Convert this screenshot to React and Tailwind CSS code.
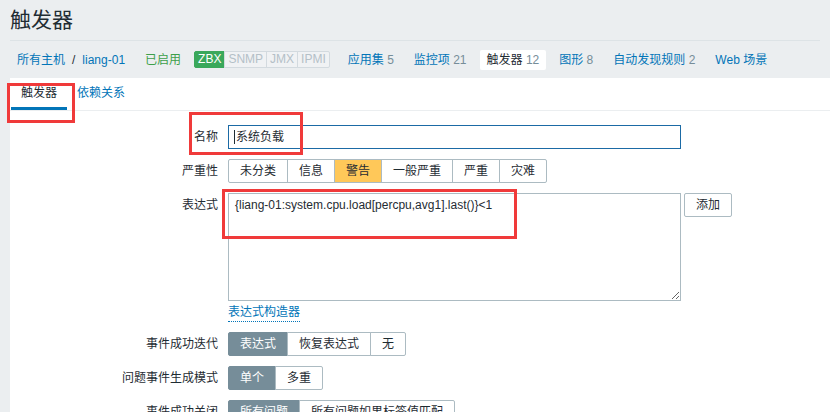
const navItems = [
  { label: '应用集', count: '5' },
  { label: '监控项', count: '21' },
  { label: '触发器', count: '12', active: true },
  { label: '图形', count: '8' },
  { label: '自动发现规则', count: '2' },
  { label: 'Web 场景' },
]

const badges = [
  { label: 'ZBX', on: true },
  { label: 'SNMP' },
  { label: 'JMX' },
  { label: 'IPMI' },
]

function Segmented({ items, selected, tone = 'grey' }) {
  return (
    <div className="flex">
      {items.map((it, i) => {
        const on = it === selected
        const onCls =
          tone === 'orange'
            ? 'bg-[#ffc859] border-[#acbbc2] text-[#1f2c33]'
            : 'bg-[#768d99] border-[#768d99] text-white'
        return (
          <div
            key={it}
            className={`h-[24px] leading-[22px] px-[11px] border whitespace-nowrap ${
              i > 0 ? '-ml-px' : 'rounded-l-[2px]'
            } ${i === items.length - 1 ? 'rounded-r-[2px]' : ''} ${
              on ? onCls : 'bg-white border-[#acbbc2] text-[#1f2c33]'
            }`}
          >
            {it}
          </div>
        )
      })}
    </div>
  )
}

function Label({ children }) {
  return <div className="text-right leading-[24px] whitespace-nowrap">{children}</div>
}

export default function App() {
  return (
    <div className="relative w-[830px] h-[412px] overflow-hidden bg-[#ebeef0] text-[12px] text-[#1f2c33] font-['Liberation_Sans','Noto_Sans_CJK_SC',sans-serif]">
      <div className="px-[10px]">
        <h1 className="text-[21px] leading-[24px] pt-[8px] pb-[8px] border-b border-[#dde3e6] font-normal">
          触发器
        </h1>
      </div>

      <div className="flex items-center h-[37px] pl-[10px] gap-[6px] whitespace-nowrap">
        <div className="flex items-center px-[7px]">
          <span className="text-[#0275b8]">所有主机</span>
          <span className="mx-[7px] text-[#1f2c33]">/</span>
          <span className="text-[#0275b8]">liang-01</span>
        </div>
        <span className="px-[7px] text-[#3d9f4a]">已启用</span>
        <div className="flex mr-[5px]">
          {badges.map((b, i) => (
            <span
              key={b.label}
              className={`h-[17px] leading-[15px] px-[3px] border ${i > 0 ? '-ml-px' : ''} ${
                b.on
                  ? 'bg-[#3aa85b] border-[#3aa85b] text-white rounded-l-[2px]'
                  : 'bg-[#f0f2f4] border-[#d3dadf] text-[#b4c0c7]'
              } ${i === badges.length - 1 ? 'rounded-r-[2px]' : ''}`}
            >
              {b.label}
            </span>
          ))}
        </div>
        {navItems.map((n) => (
          <span
            key={n.label}
            className={`px-[7px] leading-[20px] ${n.active ? 'bg-white rounded-[2px]' : ''}`}
          >
            <span className={n.active ? 'text-[#1f2c33]' : 'text-[#0275b8]'}>{n.label}</span>
            {n.count && <span className="text-[#768d99]"> {n.count}</span>}
          </span>
        ))}
      </div>

      <div className="ml-[10px] bg-white h-[400px]">
        <div className="flex border-b border-[#ebeef0] pl-px">
          <div className="pt-[8px] pb-[6px] px-[10px] leading-[15px] border-b-[3px] border-[#0275b8] text-[#1f2c33]">
            触发器
          </div>
          <div className="pt-[8px] pb-[6px] px-[10px] leading-[15px] text-[#0275b8]">依赖关系</div>
        </div>

        <div className="grid grid-cols-[208px_1fr] gap-x-[10px] gap-y-[10px] pt-[14px]">
          <Label>名称</Label>
          <div className="w-[453px] h-[24px] border border-[#1b6aa5] flex items-center px-[5px]">
            <span className="w-px h-[14px] bg-[#1f2c33] mr-px" />
            <span>系统负载</span>
          </div>

          <Label>严重性</Label>
          <Segmented
            items={['未分类', '信息', '警告', '一般严重', '严重', '灾难']}
            selected="警告"
            tone="orange"
          />

          <Label>表达式</Label>
          <div className="flex flex-col items-start">
            <div className="flex items-start gap-[3px]">
              <textarea
                readOnly
                value="{liang-01:system.cpu.load[percpu,avg1].last()}<1"
                className="block w-[453px] h-[108px] border border-[#acbbc2] py-[3px] px-[6px] leading-[16px] text-[12px] text-[#1f2c33] outline-none resize-y"
              />
              <div className="h-[24px] leading-[22px] px-[11px] border border-[#acbbc2] rounded-[2px]">
                添加
              </div>
            </div>
            <span className="mt-[2px] leading-[18px] text-[#0275b8] border-b border-dotted border-[#0275b8]">
              表达式构造器
            </span>
          </div>

          <Label>事件成功迭代</Label>
          <Segmented items={['表达式', '恢复表达式', '无']} selected="表达式" />

          <Label>问题事件生成模式</Label>
          <Segmented items={['单个', '多重']} selected="单个" />

          <Label>事件成功关闭</Label>
          <Segmented items={['所有问题', '所有问题如果标签值匹配']} selected="所有问题" />
        </div>
      </div>

      <div className="absolute left-[7px] top-[83px] w-[68px] h-[40px] border-[3px] border-[#f03a3a]" />
      <div className="absolute left-[189px] top-[112px] w-[114px] h-[43px] border-[3px] border-[#f03a3a]" />
      <div className="absolute left-[222px] top-[189px] w-[295px] h-[50px] border-[3px] border-[#f03a3a]" />
    </div>
  )
}
